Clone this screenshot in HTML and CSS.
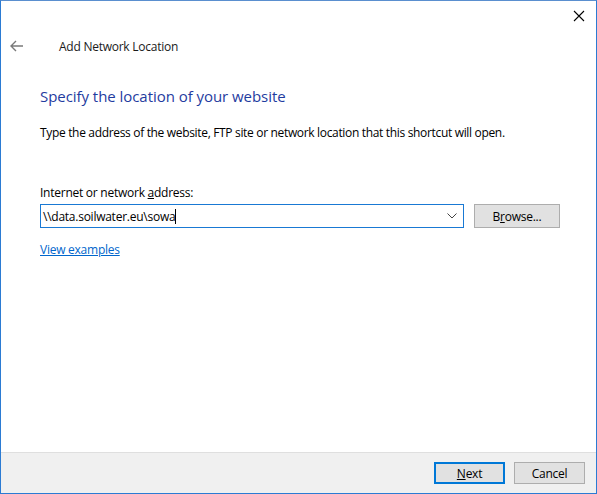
FILE: index.html
```html
<!DOCTYPE html>
<html>
<head>
<meta charset="utf-8">
<link rel="stylesheet" href="styles.css">
</head>
<body>
<div class="window">
  <div class="titlebar">
    <span class="close">
      <svg width="12" height="12" viewBox="0 0 12 12"><path d="M1 1 L11 11 M11 1 L1 11" stroke="#000" stroke-width="1.1" fill="none"/></svg>
    </span>
  </div>
  <div class="header">
    <span class="back">
      <svg width="14" height="12" viewBox="0 0 14 12"><path d="M1 6 H13 M6 1 L1 6 L6 11" stroke="#7a7a7a" stroke-width="1.4" fill="none"/></svg>
    </span>
    <span class="wtitle">Add Network Location</span>
  </div>
  <div class="content">
    <h1 class="heading">Specify the location of your website</h1>
    <p class="desc">Type the address of the website, FTP site or network location that this shortcut will open.</p>
    <div class="label">Internet or network <u>a</u>ddress:</div>
    <div class="row">
      <div class="combo">
        <span class="value">\\data.soilwater.eu\sowa<span class="caret"></span></span>
        <svg class="chev" width="10" height="6" viewBox="0 0 10 6"><path d="M0.5 0.5 L5 5 L9.5 0.5" stroke="#444" stroke-width="1" fill="none"/></svg>
      </div>
      <button class="btn browse">B<u>r</u>owse...</button>
    </div>
    <a class="link" href="#">View examples</a>
  </div>
  <div class="footer">
    <button class="btn primary"><u>N</u>ext</button>
    <button class="btn">Cancel</button>
  </div>
</div>
</body>
</html>
```
FILE: styles.css
```css
html, body {
  margin: 0;
  padding: 0;
  background: #ffffff;
}
body {
  font-family: "Open Sans", "Noto Sans", sans-serif;
  font-size: 12px;
  color: #000;
}
.window {
  box-sizing: border-box;
  width: 597px;
  height: 494px;
  border: 1px solid #2b7bd3;
  border-top-color: #5a8fcf;
  display: flex;
  flex-direction: column;
  background: #fff;
}
.titlebar {
  height: 30px;
  display: flex;
  justify-content: flex-end;
  align-items: flex-start;
}
.close {
  width: 12px;
  height: 12px;
  margin-top: 9px;
  margin-right: 11px;
  display: block;
}
.close svg { display: block; }
.header {
  height: 30px;
  display: flex;
  align-items: center;
  margin-top: 0;
}
.back {
  display: block;
  width: 14px;
  height: 12px;
  margin-left: 9px;
}
.back svg { display: block; }
.wtitle {
  margin-left: 35px;
  font-size: 12px;
  color: #1a1a1a;
  letter-spacing: -0.25px;
}
.content {
  flex: 1;
  padding: 0 0 0 39px;
}
.heading {
  margin: 25px 0 0 0;
  font-weight: normal;
  font-size: 15px;
  color: #1f3ca0;
  letter-spacing: -0.05px;
  line-height: 20px;
}
.desc {
  margin: 19px 0 0 0;
  line-height: 16px;
  letter-spacing: -0.33px;
}
.label {
  margin-top: 44px;
  line-height: 16px;
  letter-spacing: -0.25px;
}
.row {
  display: flex;
  align-items: flex-start;
  margin-top: 3px;
}
.combo {
  box-sizing: border-box;
  width: 424px;
  height: 24px;
  border: 1px solid #1979d4;
  display: flex;
  align-items: center;
  justify-content: space-between;
  padding: 0 6px 0 2px;
}
.value {
  letter-spacing: -0.25px;
  display: flex;
  align-items: center;
}
.caret {
  display: inline-block;
  width: 1px;
  height: 15px;
  background: #000;
}
.chev { display: block; }
.btn {
  box-sizing: border-box;
  font-family: "Open Sans", "Noto Sans", sans-serif;
  font-size: 12px;
  letter-spacing: -0.25px;
  color: #000;
  background: #e1e1e1;
  border: 1px solid #adadad;
  padding: 0;
  margin: 0;
  height: 23px;
  line-height: 19px;
}
.browse {
  width: 86px;
  height: 24px;
  margin-left: 10px;
}
.link {
  display: inline-block;
  margin-top: 14px;
  color: #0066cc;
  text-decoration: underline;
  letter-spacing: -0.25px;
  line-height: 16px;
}
.footer {
  height: 41px;
  box-sizing: border-box;
  background: #f0f0f0;
  border-top: 1px solid #dfdfdf;
  display: flex;
  justify-content: flex-end;
  align-items: flex-start;
  padding: 9px 11px 0 0;
  gap: 9px;
}
.footer .btn {
  width: 71px;
  height: 22px;
}
.primary {
  border: 2px solid #0078d7;
}
```
